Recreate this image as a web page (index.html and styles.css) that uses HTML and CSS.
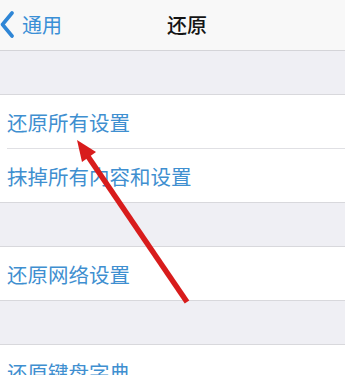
FILE: index.html
```html
<!DOCTYPE html>
<html lang="zh-CN">
<head>
    <meta charset="UTF-8">
    <meta name="viewport" content="width=device-width, initial-scale=1.0">
    <title>还原</title>
    <link rel="stylesheet" href="styles.css">
</head>
<body>
    <nav class="navbar">
        <a href="#" class="back-link">
            <svg class="chevron" width="14" height="48" viewBox="0 0 14 48">
                <path d="M12 12 L2.5 23.5 L12 35" fill="none" stroke="#2f86d6" stroke-width="3.6" stroke-linecap="round" stroke-linejoin="round"/>
            </svg>
            <span>通用</span>
        </a>
        <h1 class="title">还原</h1>
    </nav>

    <div class="spacer"></div>
    <div class="group">
        <div class="row">还原所有设置</div>
        <div class="row">抹掉所有内容和设置</div>
    </div>

    <div class="spacer"></div>
    <div class="group">
        <div class="row">还原网络设置</div>
    </div>

    <div class="spacer"></div>
    <div class="group">
        <div class="row">还原键盘字典</div>
    </div>

    <svg class="arrow" width="345" height="375" viewBox="0 0 345 375">
        <line x1="187" y1="302" x2="87" y2="155" stroke="#d81c1c" stroke-width="5.5"/>
        <polygon points="77,140 96,152 82,162" fill="#d81c1c"/>
    </svg>
</body>
</html>
```
FILE: styles.css
```css
* {
    box-sizing: border-box;
    font-family: 'Noto Sans CJK SC', 'Noto Sans', sans-serif;
}

body {
    margin: 0;
    padding: 0;
    width: 345px;
    height: 375px;
    overflow: hidden;
    background-color: #efeff4;
    position: relative;
}

.navbar {
    height: 51px;
    background-color: #f8f8f8;
    border-bottom: 1px solid #d4d4d8;
    display: flex;
    align-items: center;
}

.back-link {
    display: flex;
    align-items: center;
    gap: 8px;
    text-decoration: none;
    color: #3a8fd6;
    font-size: 20px;
}

.back-link span {
    margin-top: -2px;
}

.title {
    margin: -2px 0 0 105px;
    font-size: 20px;
    font-weight: 500;
    color: #141414;
}

.spacer {
    height: 44px;
    border-bottom: 1px solid #d8d8dc;
}

.group {
    background-color: white;
    border-bottom: 1px solid #d8d8dc;
    padding-left: 7px;
}

.row {
    height: 54px;
    display: flex;
    align-items: center;
    font-size: 20.5px;
    color: #3f8fd0;
    border-bottom: 1px solid #e0e0e4;
}

.row:last-child {
    border-bottom: none;
    height: 53px;
}

.arrow {
    position: absolute;
    top: 0;
    left: 0;
    pointer-events: none;
}
```
